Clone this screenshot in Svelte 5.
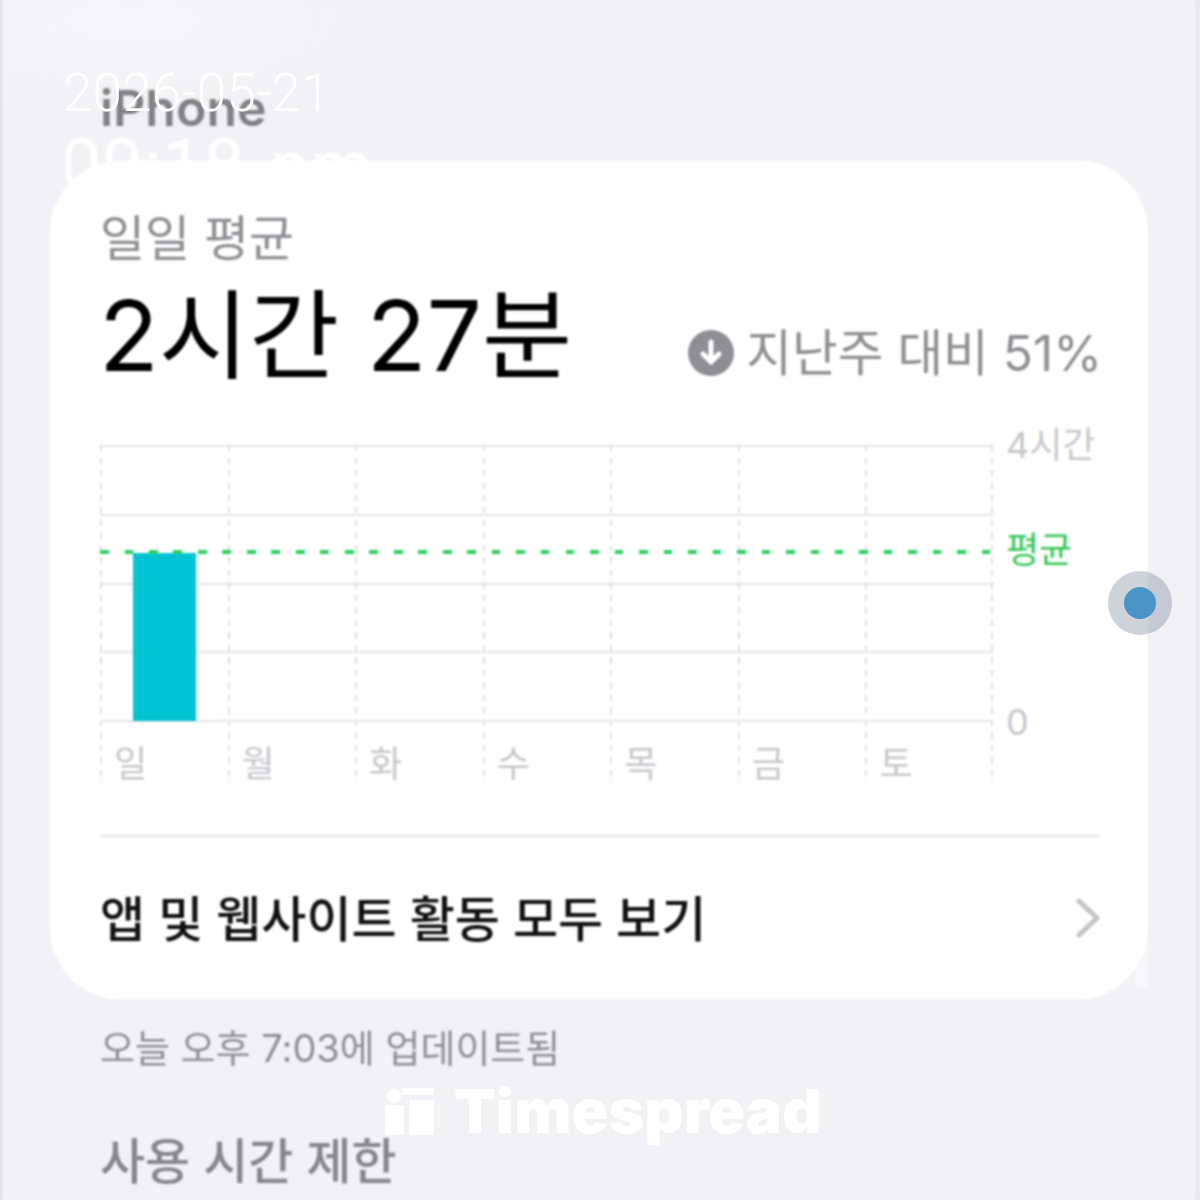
<script>
	const days = [
		{ name: '일', minutes: 147 },
		{ name: '월', minutes: 0 },
		{ name: '화', minutes: 0 },
		{ name: '수', minutes: 0 },
		{ name: '목', minutes: 0 },
		{ name: '금', minutes: 0 },
		{ name: '토', minutes: 0 }
	];
	const maxMinutes = 240;
	const plotHeight = 275;
	const average = 147;

	const toHeight = (minutes) => (minutes / maxMinutes) * plotHeight;
</script>

<div class="page">
	<div class="screen">
		<div class="time">09:18 <span>pm</span></div>
		<h2 class="device">iPhone</h2>

		<section class="card">
			<div class="pill"></div>
			<p class="label">일일 평균</p>
			<div class="summary">
				<div class="total">2시간 27분</div>
				<div class="delta">
					<svg width="46" height="46" viewBox="0 0 46 46">
						<circle cx="23" cy="23" r="23" fill="#8e8e93" />
						<path d="M23 12v20M15 24l8 8 8-8" fill="none" stroke="#fff" stroke-width="5" stroke-linecap="round" stroke-linejoin="round" />
					</svg>
					<span>지난주 대비 51%</span>
				</div>
			</div>

			<div class="chart">
				<div class="plot">
					<div class="rows">
						<div></div>
						<div></div>
						<div></div>
						<div></div>
					</div>
					<div class="days">
						{#each days as day}
							<div class="day">
								<div class="area">
									{#if day.minutes}
										<div class="bar" style="height: {toHeight(day.minutes)}px"></div>
									{/if}
								</div>
								<div class="day-name">{day.name}</div>
							</div>
						{/each}
					</div>
					<div class="avg-line" style="top: {plotHeight - toHeight(average)}px"></div>
				</div>
				<div class="axis">
					<span class="axis-top">4시간</span>
					<span class="axis-avg" style="top: {plotHeight - toHeight(average)}px">평균</span>
					<span class="axis-zero">0</span>
				</div>
			</div>

			<div class="row">
				<span>앱 및 웹사이트 활동 모두 보기</span>
				<svg width="24" height="40" viewBox="0 0 24 40">
					<path d="M3 3l18 17L3 37" fill="none" stroke="#c4c4c7" stroke-width="5" stroke-linecap="round" stroke-linejoin="round" />
				</svg>
			</div>
		</section>

		<p class="updated">오늘 오후 7:03에 업데이트됨</p>
		<h2 class="limit">사용 시간 제한</h2>
	</div>

	<div class="date">2026-05-21</div>

	<div class="touch"><div></div></div>

	<div class="brand">
		<svg width="49" height="48" viewBox="0 0 49 48">
			<circle cx="9" cy="9" r="7" fill="#fff" />
			<rect x="0" y="18" width="19" height="30" fill="#fff" />
			<rect x="17" y="1" width="32" height="7" fill="#fff" />
			<rect x="24" y="13" width="25" height="35" fill="#fff" />
		</svg>
		<span>Timespread</span>
	</div>
</div>

<style>
	:global(body) {
		margin: 0;
	}

	.page {
		position: relative;
		width: 1200px;
		height: 1200px;
		overflow: hidden;
		background: #f1f1f6;
		font-family: Inter, 'Noto Sans CJK KR', sans-serif;
	}

	.screen {
		height: 1200px;
		box-sizing: border-box;
		padding-top: 82px;
		border-left: 2px solid #dcdce0;
		border-right: 4px solid #e8e8ec;
		background: radial-gradient(ellipse 340px 110px at 130px 20px, #f6f6f9, transparent);
		filter: blur(0.8px);
	}

	.time {
		position: absolute;
		left: 59px;
		top: 126px;
		color: #fff;
		font-family: Roboto, sans-serif;
		font-weight: 400;
		font-size: 72px;
		line-height: 80px;
		letter-spacing: 1px;
	}

	.time span {
		font-size: 70px;
		margin-left: 6px;
	}

	.device {
		margin: 0 0 0 98px;
		color: #808086;
		font-size: 50px;
		line-height: 52px;
		font-weight: 600;
	}

	.card {
		position: relative;
		box-sizing: border-box;
		width: 1098px;
		height: 840px;
		margin: 26px 0 0 48px;
		padding: 51px 48px 0 50px;
		background: #fff;
		border-radius: 72px;
	}

	.pill {
		position: absolute;
		right: 0;
		bottom: 12px;
		width: 13px;
		height: 48px;
		background: #f8f8fb;
		border-radius: 6px;
		z-index: -1;
	}

	.label {
		margin: 0;
		color: #8e8e93;
		font-size: 49px;
		line-height: 56px;
	}

	.summary {
		display: flex;
		justify-content: space-between;
		align-items: flex-end;
		height: 100px;
		margin-top: 19px;
	}

	.total {
		margin-left: -1px;
		color: #000;
		font-size: 98px;
		line-height: 100px;
	}

	.delta {
		display: flex;
		align-items: center;
		gap: 12px;
		margin: 0 -2px 3px 0;
		color: #8e8e93;
		font-size: 49.7px;
		line-height: 60px;
	}

	.chart {
		display: flex;
		margin-top: 59px;
	}

	.plot {
		position: relative;
		width: 893px;
		height: 338px;
	}

	.rows {
		position: absolute;
		inset: 0 0 auto 0;
		height: 277px;
		border-bottom: 2px solid #e5e5ea;
		box-sizing: border-box;
	}

	.rows div {
		height: 68.75px;
		box-sizing: border-box;
		border-top: 2px solid #e5e5ea;
	}

	.days {
		position: relative;
		display: grid;
		grid-template-columns: repeat(7, 1fr);
		height: 338px;
		background: repeating-linear-gradient(to bottom, #dedee3 0 6px, transparent 6px 12.5px) right top / 2px 100% no-repeat;
	}

	.day {
		height: 338px;
		background: repeating-linear-gradient(to bottom, #dedee3 0 6px, transparent 6px 12.5px) left top / 2px 100% no-repeat;
	}

	.area {
		display: flex;
		align-items: flex-end;
		height: 276px;
		padding-left: 33px;
		box-sizing: border-box;
	}

	.bar {
		width: 63px;
		background: #00c4d3;
	}

	.day-name {
		padding-left: 14px;
		color: #c7c7cc;
		font-size: 36px;
		line-height: 40px;
		margin-top: 23px;
	}

	.avg-line {
		position: absolute;
		left: 0;
		right: 0;
		height: 4px;
		margin-top: -2px;
		background: repeating-linear-gradient(to right, #28d05c 0 8.5px, transparent 8.5px 24.5px);
	}

	.axis {
		position: relative;
		flex: 1;
		font-size: 36px;
		line-height: 44px;
		color: #c7c7cc;
	}

	.axis span {
		position: absolute;
		left: 13px;
	}

	.axis-top {
		top: -22px;
	}

	.axis .axis-avg {
		color: #34c759;
		margin-top: -24px;
	}

	.axis-zero {
		top: 255px;
	}

	.row {
		display: flex;
		justify-content: space-between;
		align-items: center;
		height: 157px;
		margin-top: 52px;
		border-top: 2px solid #e5e5ea;
		color: #111;
		font-size: 49px;
		font-weight: 500;
	}

	.row svg {
		margin-top: 4px;
	}

	.updated {
		margin: 24px 0 0 98px;
		color: #8e8e93;
		font-size: 38px;
		line-height: 48px;
	}

	.limit {
		margin: 60px 0 0 98px;
		color: #85858b;
		font-size: 49px;
		line-height: 60px;
		font-weight: 500;
	}

	.date {
		position: absolute;
		left: 63px;
		top: 65px;
		color: #fff;
		font-family: Roboto, sans-serif;
		font-weight: 300;
		font-size: 53px;
		line-height: 56px;
		letter-spacing: 0.2px;
	}

	.touch {
		position: absolute;
		left: 1108px;
		top: 571px;
		display: flex;
		align-items: center;
		justify-content: center;
		width: 64px;
		height: 64px;
		border-radius: 50%;
		background: rgba(97, 114, 132, 0.31);
	}

	.touch div {
		width: 32px;
		height: 32px;
		border-radius: 50%;
		background: #4a94c8;
	}

	.brand {
		position: absolute;
		left: 385px;
		top: 1087px;
		display: flex;
		align-items: center;
		gap: 20px;
		color: #fff;
		font-size: 61px;
		line-height: 48px;
		font-weight: 900;
	}
</style>
